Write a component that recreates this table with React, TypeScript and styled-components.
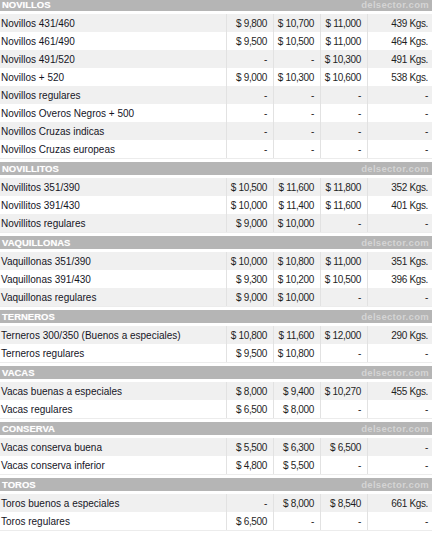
import styled, { createGlobalStyle } from "styled-components";

const GlobalStyle = createGlobalStyle`
  html, body {
    margin: 0;
    padding: 0;
    background: #ffffff;
  }
  body {
    font-family: "Liberation Sans", Arial, sans-serif;
    overflow: hidden;
  }
`;

const Page = styled.div`
  width: 432px;
  margin-top: -5px;
`;

const Section = styled.section`
  margin-top: 3px;
`;

const Header = styled.div`
  height: 13px;
  background-color: #b5b5b5;
  display: flex;
  align-items: center;
  justify-content: space-between;
  padding: 0 3px 0 2px;
  margin-bottom: 3px;
`;

const HeaderTitle = styled.span`
  font-size: 9.5px;
  font-weight: bold;
  color: #ffffff;
  text-shadow: 0 0 1px #d8d8d8;
  line-height: 13px;
`;

const Brand = styled.span`
  font-size: 9.5px;
  font-weight: bold;
  color: #d4d4d4;
  letter-spacing: 0.3px;
  line-height: 13px;
`;

const Rows = styled.div`
  border-bottom: 1px solid #ececec;
`;

const Row = styled.div`
  display: grid;
  grid-template-columns: 226px 47px 47px 47px 1fr;
  height: 18px;
  overflow: hidden;
  &:nth-child(odd) {
    background-color: #f0f0f0;
  }
`;

const Label = styled.div`
  font-size: 10px;
  color: #15151f;
  line-height: 20px;
  padding-left: 1px;
  white-space: nowrap;
`;

const Value = styled.div<{ $wide?: boolean }>`
  font-size: 10px;
  color: #1f1f1f;
  line-height: 20px;
  text-align: right;
  letter-spacing: -0.35px;
  border-left: 1px solid #e2e2e2;
  padding-right: ${(p) => (p.$wide ? "4px" : "6px")};
  white-space: nowrap;
`;

type Item = [string, string, string, string, string];

interface IGroup {
  title: string;
  items: Item[];
}

const D = "-";

const groups: IGroup[] = [
  {
    title: "NOVILLOS",
    items: [
      ["Novillos 431/460", "$ 9,800", "$ 10,700", "$ 11,000", "439 Kgs."],
      ["Novillos 461/490", "$ 9,500", "$ 10,500", "$ 11,000", "464 Kgs."],
      ["Novillos 491/520", D, D, "$ 10,300", "491 Kgs."],
      ["Novillos + 520", "$ 9,000", "$ 10,300", "$ 10,600", "538 Kgs."],
      ["Novillos regulares", D, D, D, D],
      ["Novillos Overos Negros + 500", D, D, D, D],
      ["Novillos Cruzas indicas", D, D, D, D],
      ["Novillos Cruzas europeas", D, D, D, D],
    ],
  },
  {
    title: "NOVILLITOS",
    items: [
      ["Novillitos 351/390", "$ 10,500", "$ 11,600", "$ 11,800", "352 Kgs."],
      ["Novillitos 391/430", "$ 10,000", "$ 11,400", "$ 11,600", "401 Kgs."],
      ["Novillitos regulares", "$ 9,000", "$ 10,000", D, D],
    ],
  },
  {
    title: "VAQUILLONAS",
    items: [
      ["Vaquillonas 351/390", "$ 10,000", "$ 10,800", "$ 11,000", "351 Kgs."],
      ["Vaquillonas 391/430", "$ 9,300", "$ 10,200", "$ 10,500", "396 Kgs."],
      ["Vaquillonas regulares", "$ 9,000", "$ 10,000", D, D],
    ],
  },
  {
    title: "TERNEROS",
    items: [
      ["Terneros 300/350 (Buenos a especiales)", "$ 10,800", "$ 11,600", "$ 12,000", "290 Kgs."],
      ["Terneros regulares", "$ 9,500", "$ 10,800", D, D],
    ],
  },
  {
    title: "VACAS",
    items: [
      ["Vacas buenas a especiales", "$ 8,000", "$ 9,400", "$ 10,270", "455 Kgs."],
      ["Vacas regulares", "$ 6,500", "$ 8,000", D, D],
    ],
  },
  {
    title: "CONSERVA",
    items: [
      ["Vacas conserva buena", "$ 5,500", "$ 6,300", "$ 6,500", D],
      ["Vacas conserva inferior", "$ 4,800", "$ 5,500", D, D],
    ],
  },
  {
    title: "TOROS",
    items: [
      ["Toros buenos a especiales", D, "$ 8,000", "$ 8,540", "661 Kgs."],
      ["Toros regulares", "$ 6,500", D, D, D],
    ],
  },
];

function App() {
  return (
    <>
      <GlobalStyle />
      <Page>
        {groups.map((group) => (
          <Section key={group.title}>
            <Header>
              <HeaderTitle>{group.title}</HeaderTitle>
              <Brand>delsector.com</Brand>
            </Header>
            <Rows>
              {group.items.map(([name, a, b, c, kg]) => (
                <Row key={name}>
                  <Label>{name}</Label>
                  <Value>{a}</Value>
                  <Value>{b}</Value>
                  <Value>{c}</Value>
                  <Value $wide>{kg}</Value>
                </Row>
              ))}
            </Rows>
          </Section>
        ))}
      </Page>
    </>
  );
}

export default App;
